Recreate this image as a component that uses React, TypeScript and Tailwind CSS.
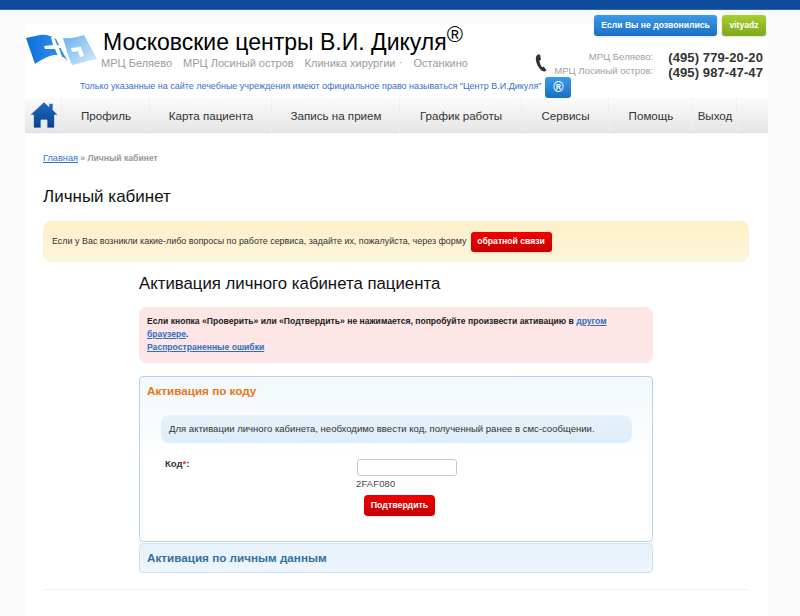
const font = "font-['Liberation_Sans',Arial,sans-serif]";

const navItems = [
  { label: "Профиль", width: "w-[88px]" },
  { label: "Карта пациента", width: "w-[122px]" },
  { label: "Запись на прием", width: "w-[128px]" },
  { label: "График работы", width: "w-[122px]" },
  { label: "Сервисы", width: "w-[87px]" },
  { label: "Помощь", width: "w-[84px]" },
  { label: "Выход", width: "w-[44px]" },
];

function Logo() {
  return (
    <svg width="72" height="34" viewBox="0 0 72 34" className="shrink-0">
      <defs>
        <linearGradient id="flagLeft" x1="0" x2="1" y1="0" y2="0">
          <stop offset="0" stopColor="#0c6fdc" />
          <stop offset="1" stopColor="#3d97e6" />
        </linearGradient>
        <linearGradient id="flagRight" x1="0" x2="1" y1="0" y2="1">
          <stop offset="0" stopColor="#62b0ec" />
          <stop offset="1" stopColor="#dcedfa" />
        </linearGradient>
      </defs>
      <path d="M0 5 L14 2 C20 1 26 3 30 6 C34 14 38 22 42 28 C36 22 30 21 24 23 C18 25 13 28 9 31 Z" fill="url(#flagLeft)" />
      <path d="M37 5 C44 6 51 4 58 2 L71 26 C62 27 54 31 46 32 C42 24 40 14 37 5 Z" fill="url(#flagRight)" />
      <path d="M25 4 L28 4 L31 12 L37 13 L37 15 L33 15 L36 24 L32 23 L29 16 L19 16 L18 13 L27 12 Z" fill="#fff" />
      <path d="M45 15 L55 14 L58 23 L54 24 L52 18 L46 19 Z" fill="#fff" />
    </svg>
  );
}

function HomeIcon() {
  return (
    <svg width="30" height="30" viewBox="0 0 30 30">
      <defs>
        <linearGradient id="homeFill" x1="0" x2="0" y1="0" y2="1">
          <stop offset="0" stopColor="#1d6cc0" />
          <stop offset="1" stopColor="#0a3f8c" />
        </linearGradient>
      </defs>
      <path
        d="M15 2 L20 6.5 L20 3.5 L24 3.5 L24 10 L29 15 L25.5 15 L25.5 28 L18 28 L18 20 L12 20 L12 28 L4.5 28 L4.5 15 L1 15 Z"
        fill="url(#homeFill)"
        stroke="#dfe6ee"
        strokeWidth="0.8"
      />
    </svg>
  );
}

function PhoneIcon() {
  return (
    <svg width="12" height="18" viewBox="0 0 12 18" className="shrink-0">
      <path
        d="M3 0.5 C1 1.5 0.5 3.5 1 6.5 C1.6 10.5 4 15 7.5 17 C9 17.8 10.5 17.5 11.5 16.2 L8.6 12.6 L7 13.2 C5.6 11.5 4.6 8.6 4.5 6.5 L6 5.6 L5 0.5 Z"
        fill="#333"
      />
    </svg>
  );
}

export default function App() {
  return (
    <div className={`${font} h-[616px] overflow-hidden bg-[#fafafa] text-[#222]`}>
      <div className="h-[10px] bg-[#0d4a9a] border-b border-[#2c69b0]" />

      <div className="ml-[25px] mt-[14px] w-[743px] bg-white">
        {/* Header */}
        <div className="h-[74px]">
          <div className="flex h-[52px] items-start justify-between">
            <div className="flex items-start">
              <div className="mt-[9px] ml-px w-[77px]">
                <Logo />
              </div>
              <div className="flex flex-col">
                <div className="flex items-start text-[23px] leading-[26px] text-black mt-[5px] whitespace-nowrap">
                  Московские центры В.И. Дикуля
                  <span className="text-[22px] leading-[16px] mt-[-2px]">®</span>
                </div>
                <div className="flex gap-[11px] text-[11px] leading-[14px] text-[#9a9a9a] whitespace-nowrap mt-[1px] -ml-[2px]">
                  <span>МРЦ Беляево</span>
                  <span>МРЦ Лосиный остров</span>
                  <span>Клиника хирургии ⋅</span>
                  <span>Останкино</span>
                </div>
              </div>
            </div>

            <div className="mt-[-9px] mr-[2px] flex w-[231px] shrink-0 flex-col items-end">
              <div className="flex gap-[5px]">
                <span className="flex h-[21px] w-[123px] items-center justify-center whitespace-nowrap rounded-[3px] bg-gradient-to-b from-[#3a9be8] to-[#1a6fc4] text-[8.6px] font-bold text-white shadow-sm">
                  Если Вы не дозвонились
                </span>
                <span className="flex h-[21px] w-[44px] items-center justify-center rounded-[3px] bg-gradient-to-b from-[#a8cf30] to-[#7fa81c] text-[8.6px] font-bold text-white shadow-sm">
                  vityadz
                </span>
              </div>
              <div className="mt-[14px] flex w-full items-start">
                <div className="mt-[4px]">
                  <PhoneIcon />
                </div>
                <div className="ml-auto mr-[15px] flex flex-col items-end text-[9.6px] leading-[14px] text-[#a0a0a0]">
                  <span>МРЦ Беляево:</span>
                  <span className="whitespace-nowrap">МРЦ Лосиный остров:</span>
                </div>
                <div className="mr-[3px] flex flex-col text-[13px] font-bold leading-[15px] text-[#333] tracking-[0.1px] whitespace-nowrap">
                  <span>(495) 779-20-20</span>
                  <span>(495) 987-47-47</span>
                </div>
              </div>
            </div>
          </div>
          <div className="flex w-fit items-center ml-[55px] h-[22px] text-[9px] text-[#3a70c4] whitespace-nowrap">
            <span>Только указанные на сайте лечебные учреждения имеют официальное право называться "Центр В.И.Дикуля"</span>
            <span className="ml-[4px] flex h-[21px] w-[26px] items-center justify-center rounded-[3px] bg-gradient-to-b from-[#3a9be8] to-[#1a6fc4] text-[14px] font-bold text-white">
              ®
            </span>
          </div>
        </div>

        {/* Nav */}
        <div className="flex h-[35px] items-center bg-gradient-to-b from-[#fbfbfb] to-[#e6e6e6] border-b border-[#dedede] text-[11.6px] text-[#333]">
          <div className="flex h-full w-[37px] shrink-0 items-center justify-center border-r border-[#eeeeee] pl-[1px]">
            <HomeIcon />
          </div>
          {navItems.map((item) => (
            <span key={item.label} className={`${item.width} flex h-full shrink-0 items-center justify-center whitespace-nowrap border-r border-[#eeeeee] pt-[2px] pl-[1px]`}>
              {item.label}
            </span>
          ))}
        </div>

        {/* Content */}
        <div className="px-[18px] h-[483px]">
          <div className="pt-[19px] text-[8.6px] leading-[12px] font-bold text-[#999]">
            <a className="text-[9.2px] font-normal text-[#2f72c4] underline">Главная</a> » Личный кабинет
          </div>
          <h1 className="mt-[22px] text-[17px] leading-[22px] text-[#111]">Личный кабинет</h1>

          <div className="mt-[13px] flex h-[41px] w-[706px] items-center rounded-[8px] bg-gradient-to-b from-[#feefc8] to-[#fdf5db] pl-[9px] text-[8.95px] whitespace-nowrap text-[#333]">
            Если у Вас возникли какие-либо вопросы по работе сервиса, задайте их, пожалуйста, через форму
            <span className="ml-[4px] flex h-[20px] w-[81px] items-center justify-center whitespace-nowrap rounded-[3px] bg-gradient-to-b from-[#f00000] to-[#c80000] text-[8.6px] font-bold text-white shadow-sm">
              обратной связи
            </span>
          </div>

          <div className="ml-[96px] w-[514px]">
            <h2 className="mt-[11px] text-[16.8px] leading-[22px] text-[#111]">Активация личного кабинета пациента</h2>

            <div className="mt-[12px] h-[56px] rounded-[8px] bg-[#fee5e6] pl-[8px] pr-[30px] pt-[8px] text-[8.6px] font-bold leading-[13px] text-[#222]">
              Если кнопка «Проверить» или «Подтвердить» не нажимается, попробуйте произвести активацию в{" "}
              <a className="text-[#2f6fc0] underline">другом браузере</a>.
              <br />
              <a className="text-[#2f6fc0] underline">Распространенные ошибки</a>
            </div>

            <div className="mt-[13px] h-[166px] rounded-[4px] border border-[#b5d4ec] bg-gradient-to-b from-[#f2f8fb] via-white to-white to-[40%]">
              <h3 className="pl-[7px] pt-[7px] text-[11.7px] font-bold leading-[14px] text-[#e8761a]">Активация по коду</h3>
              <div className="ml-[21px] mt-[17px] flex h-[28px] w-[471px] items-center whitespace-nowrap rounded-[8px] bg-gradient-to-b from-[#e6f2fb] to-[#dcedf9] pl-[8px] text-[9.55px] text-[#333]">
                Для активации личного кабинета, необходимо ввести код, полученный ранее в смс-сообщении.
              </div>
              <div className="mt-[16px] flex">
                <span className="ml-[25px] w-[192px] text-[9.5px] font-bold leading-[10px] text-[#333]">
                  Код<span className="text-[#e33]">*</span>:
                </span>
                <div className="flex flex-col items-start">
                  <input className="h-[17px] w-[100px] rounded-[3px] border border-[#c8c8c8] bg-white" readOnly />
                  <span className="mt-[1px] -ml-[1px] text-[9.4px] leading-[13px] tracking-[0.2px] text-[#444]">2FAF080</span>
                  <span className="mt-[5px] ml-[7px] flex h-[21px] w-[71px] items-center justify-center rounded-[4px] bg-gradient-to-b from-[#f00000] to-[#c40000] text-[8.8px] font-bold text-white shadow-sm">
                    Подтвердить
                  </span>
                </div>
              </div>
            </div>

            <div className="mt-px flex h-[30px] items-center rounded-[4px] border border-[#cfe2f2] bg-gradient-to-b from-[#e6f1fb] to-[#edf5fc] pl-[7px] text-[11.7px] font-bold text-[#37709f]">
              Активация по личным данным
            </div>
          </div>

          <div className="mt-[16px] h-px w-[706px] bg-[#f0f0f0]" />
        </div>
      </div>
    </div>
  );
}
